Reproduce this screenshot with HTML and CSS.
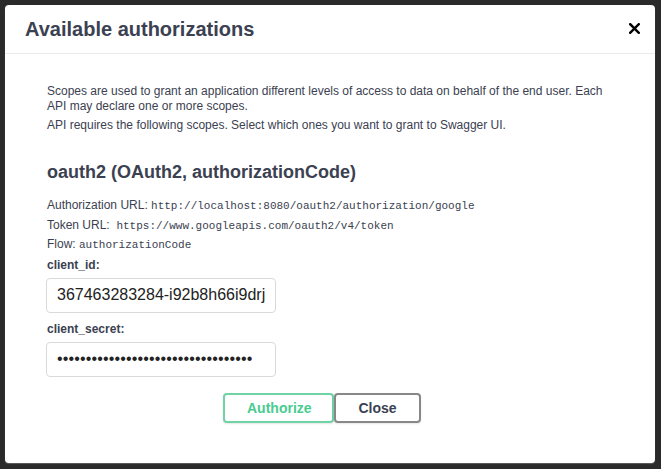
FILE: index.html
```html
<!DOCTYPE html>
<html lang="en">
<head>
<meta charset="utf-8">
<title>Available authorizations</title>
<link rel="stylesheet" href="styles.css">
</head>
<body>
<div class="backdrop">
  <div class="modal">
    <div class="modal-header">
      <h3 class="modal-title">Available authorizations</h3>
      <button class="close-modal" type="button" aria-label="Close">
        <svg width="11" height="11" viewBox="0 0 11 11"><path d="M1.2 1.2 L9.8 9.8 M9.8 1.2 L1.2 9.8" stroke="#000" stroke-width="2.4" stroke-linecap="square"/></svg>
      </button>
    </div>
    <div class="modal-content">
      <p class="desc">Scopes are used to grant an application different levels of access to data on behalf of the end user. Each API may declare one or more scopes.</p>
      <p class="desc">API requires the following scopes. Select which ones you want to grant to Swagger UI.</p>
      <h4 class="auth-title">oauth2 (OAuth2, authorizationCode)</h4>
      <div class="auth-info">
        <div class="info-row">Authorization URL: <code>http://localhost:8080/oauth2/authorization/google</code></div>
        <div class="info-row">Token URL:&nbsp; <code>https://www.googleapis.com/oauth2/v4/token</code></div>
        <div class="info-row">Flow: <code>authorizationCode</code></div>
      </div>
      <div class="field">
        <label class="field-label" for="client_id">client_id:</label>
        <input class="field-input" id="client_id" type="text" value="367463283284-i92b8h66i9drjq4kmuv1a.apps.googleusercontent.com">
      </div>
      <div class="field">
        <label class="field-label" for="client_secret">client_secret:</label>
        <input class="field-input" id="client_secret" type="password" value="abcdefghijklmnopqrstuvwxyz01234567">
      </div>
      <div class="btn-wrapper">
        <button class="btn btn-authorize" type="button">Authorize</button>
        <button class="btn btn-close" type="button">Close</button>
      </div>
    </div>
  </div>
</div>
</body>
</html>
```

FILE: styles.css
```css
* { box-sizing: border-box; }
html, body { margin: 0; padding: 0; }
body {
  background: #2a2a2a;
  font-family: "Liberation Sans", Arial, sans-serif;
  color: #3b4151;
  width: 661px;
  height: 469px;
  overflow: hidden;
}
.backdrop {
  padding: 5px 6px 6px 5px;
}
.modal {
  width: 650px;
  background: #fff;
  border-radius: 4px;
  box-shadow: 0 1px 1px rgba(255,255,255,0.25);
}
.modal-header {
  height: 49px;
  border-bottom: 1px solid #ebebeb;
  display: flex;
  align-items: center;
  justify-content: space-between;
  padding: 0 15px 0 20px;
}
.modal-title {
  margin: 0;
  font-size: 20px;
  font-weight: 700;
  color: #3b4151;
  line-height: 23px;
}
.close-modal {
  border: 0;
  background: none;
  padding: 0;
  width: 11px;
  height: 11px;
  display: flex;
  margin-top: -2px;
}
.modal-content {
  padding: 30px 42px 40px 41px;
}
.desc {
  margin: 0 0 4px;
  font-size: 12px;
  line-height: 15px;
  padding-left: 1px;
}
.auth-title {
  margin: 29px 0 0;
  font-size: 18px;
  font-weight: 700;
  line-height: 21px;
  padding-left: 1px;
}
.auth-info {
  margin-top: 13px;
  padding-left: 1px;
}
.info-row {
  font-size: 12px;
  line-height: 18.5px;
}
.info-row code {
  font-family: "Liberation Mono", "DejaVu Sans Mono", monospace;
  font-size: 11px;
  color: #3b4151;
}
.field {
  display: flex;
  flex-direction: column;
  align-items: flex-start;
  margin-top: 3px;
}
.field + .field { margin-top: 9px; }
.field-label {
  font-size: 12px;
  font-weight: 700;
  line-height: 15px;
  margin-bottom: 5px;
  padding-left: 1px;
}
.field-input {
  width: 230px;
  height: 35px;
  padding: 0 10px;
  border: 1px solid #d9d9d9;
  border-radius: 4px;
  background: #fff;
  font-family: "Liberation Sans", Arial, sans-serif;
  font-size: 16px;
  color: #222;
  outline: none;
}
.field-input[type=password] {
  letter-spacing: 0.15px;
}
.btn-wrapper {
  display: flex;
  justify-content: center;
  padding-right: 15px;
  margin-top: 16px;
}
.btn {
  height: 30px;
  padding: 0 22px;
  font-family: "Liberation Sans", Arial, sans-serif;
  font-size: 14px;
  font-weight: 700;
  background: #fff;
  border: 2px solid #888;
  border-radius: 4px;
  color: #3b4151;
  box-shadow: 0 1px 2px rgba(0,0,0,0.1);
}
.btn-authorize {
  color: #49cc90;
  border-color: #6fd3a5;
  width: 111px;
}
.btn-close {
  width: 87px;
}
```
